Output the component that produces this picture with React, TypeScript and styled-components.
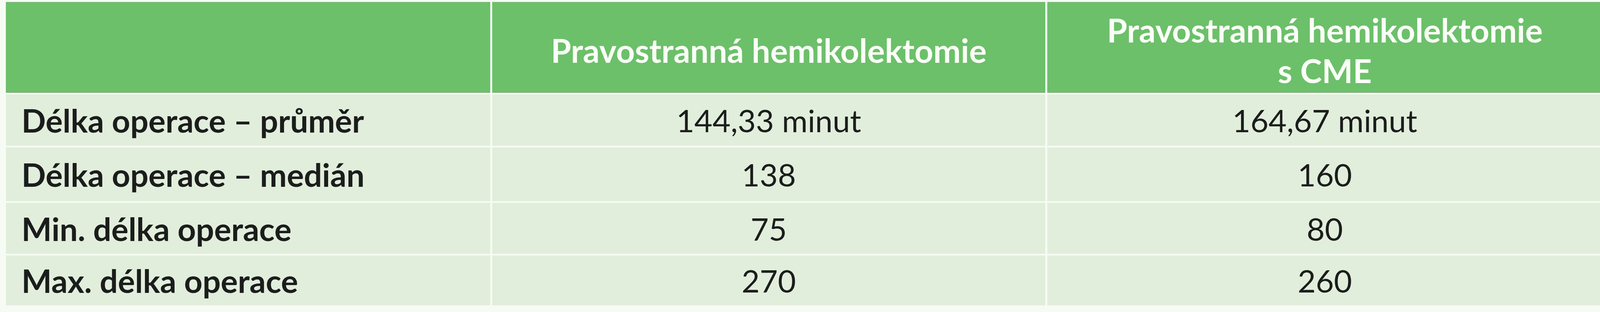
import { Fragment } from 'react';
import styled, { createGlobalStyle } from 'styled-components';

const GlobalStyle = createGlobalStyle`
  html, body {
    margin: 0;
    padding: 0;
    background: #f6fcf4;
  }
  body {
    font-family: Lato, "Open Sans", "Liberation Sans", sans-serif;
  }
`

const rows = [
  { label: 'Délka operace – průměr', a: '144,33 minut', b: '164,67 minut' },
  { label: 'Délka operace – medián', a: '138', b: '160' },
  { label: 'Min. délka operace', a: '75', b: '80' },
  { label: 'Max. délka operace', a: '270', b: '260' },
];

function App() {
  return <Page>
    <GlobalStyle />
    <Table>
      <HeadCell />
      <HeadCell>Pravostranná hemikolektomie</HeadCell>
      <HeadCell>Pravostranná hemikolektomie<br />s CME</HeadCell>
      {rows.map(r => (
        <Fragment key={r.label}>
          <LabelCell>{r.label}</LabelCell>
          <ValueCell>{r.a}</ValueCell>
          <ValueCell>{r.b}</ValueCell>
        </Fragment>
      ))}
    </Table>
  </Page>;
}
export default App;

const Page = styled.main`
  width: 4126px;
  height: 800px;
  padding: 5px 0 0 15px;
  box-sizing: border-box;
`
const Table = styled.section`
  display: grid;
  width: 4087px;
  grid-template-columns: 1240px 1416px 1421px;
  grid-template-rows: 233px 132px 138px 131px 128px;
  column-gap: 5px;
  row-gap: 4px;
`
const HeadCell = styled.div`
  background: #6cc06a;
  border-top: 2px solid #7bb679;
  border-bottom: 2px solid #7fae7c;
  color: #fbfff7;
  font-weight: 700;
  font-size: 84px;
  line-height: 104px;
  text-align: center;
  display: flex;
  align-items: center;
  justify-content: center;
  padding-top: 14px;
  box-sizing: border-box;
`
const LabelCell = styled.div`
  background: #e2eedc;
  color: #1b1d1c;
  font-weight: 700;
  font-size: 82px;
  display: flex;
  align-items: center;
  padding-left: 40px;
`
const ValueCell = styled.div`
  background: #e2eedc;
  color: #1b1d1c;
  font-weight: 400;
  font-size: 80px;
  display: flex;
  align-items: center;
  justify-content: center;
`
